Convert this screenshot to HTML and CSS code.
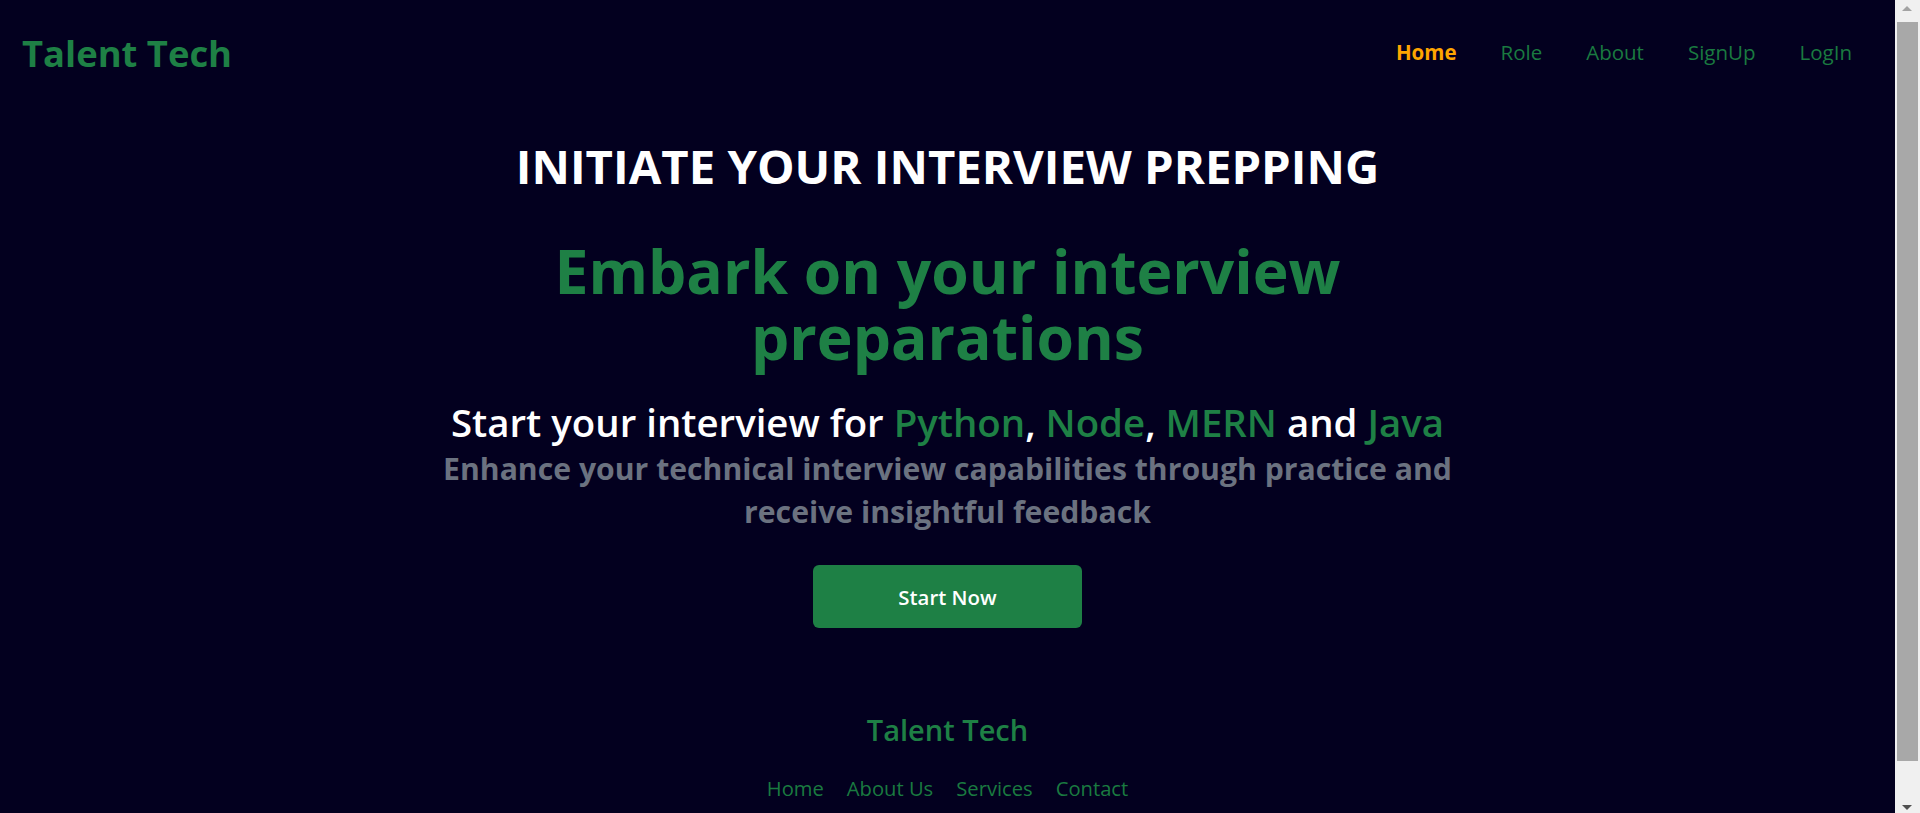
FILE: index.html
```html
<!DOCTYPE html>
<html lang="en">
<head>
<meta charset="utf-8">
<title>Talent Tech</title>
<link rel="stylesheet" href="styles.css">
</head>
<body>
<header class="navbar">
  <div class="logo">Talent Tech</div>
  <nav>
    <ul class="nav-links">
      <li><a href="#" class="active">Home</a></li>
      <li><a href="#">Role</a></li>
      <li><a href="#">About</a></li>
      <li><a href="#">SignUp</a></li>
      <li><a href="#">LogIn</a></li>
    </ul>
  </nav>
</header>
<main class="hero">
  <h1 class="hero-title">INITIATE YOUR INTERVIEW PREPPING</h1>
  <h2 class="hero-headline">Embark on your interview preparations</h2>
  <h3 class="hero-langs">Start your interview for <span class="hl">Python</span>, <span class="hl">Node</span>, <span class="hl">MERN</span> and <span class="hl">Java</span></h3>
  <p class="hero-sub">Enhance your technical interview capabilities through practice and receive insightful feedback</p>
  <button class="cta" type="button">Start Now</button>
</main>
<footer class="footer">
  <h3 class="footer-title">Talent Tech</h3>
  <ul class="footer-links">
    <li><a href="#">Home</a></li>
    <li><a href="#">About Us</a></li>
    <li><a href="#">Services</a></li>
    <li><a href="#">Contact</a></li>
  </ul>
</footer>
<div class="scrollbar" aria-hidden="true">
  <span class="sb-arrow sb-up"></span>
  <span class="sb-thumb"></span>
  <span class="sb-arrow sb-down"></span>
</div>
</body>
</html>
```

FILE: styles.css
```css
* { box-sizing: border-box; }

html { background: #03001f; }

body {
  margin: 0;
  padding-right: 25px;
  background: #03001f;
  font-family: "Open Sans", "Noto Sans", sans-serif;
  color: #ffffff;
}

a { text-decoration: none; }

.navbar {
  display: flex;
  align-items: center;
  justify-content: space-between;
  height: 106px;
  padding: 0 43px 0 22px;
}

.logo {
  font-size: 36.4px;
  font-weight: 700;
  color: #1e8045;
}

.nav-links {
  display: flex;
  gap: 44px;
  margin: -2px 0 0;
  padding: 0;
  list-style: none;
}

.nav-links a {
  font-size: 20.5px;
  color: #1a7a40;
}

.nav-links a.active {
  color: #ffa500;
  font-weight: 700;
}

.hero {
  display: flex;
  flex-direction: column;
  align-items: center;
  text-align: center;
  padding-top: 27px;
}

.hero-title {
  margin: 0;
  font-size: 47.3px;
  font-weight: 700;
  color: #ffffff;
}

.hero-headline {
  max-width: 1024px;
  margin: 40px 0 0;
  font-size: 60.6px;
  line-height: 66px;
  font-weight: 700;
  color: #1e8045;
}

.hero-langs {
  margin: 31px 0 0;
  font-size: 38.4px;
  line-height: 43px;
  font-weight: 600;
  color: #ffffff;
}

.hl { color: #1e8045; }

.hero-sub {
  max-width: 1040px;
  margin: 3px 0 0;
  font-size: 30.2px;
  line-height: 43px;
  font-weight: 700;
  color: #6b7280;
}

.cta {
  width: 269px;
  height: 63px;
  margin-top: 32px;
  border: none;
  border-radius: 6px;
  background: #1e8045;
  color: #ffffff;
  font-family: inherit;
  font-size: 20.4px;
  font-weight: 600;
}

.footer {
  display: flex;
  flex-direction: column;
  align-items: center;
  padding: 82px 0 55px;
}

.footer-title {
  margin: 0;
  font-size: 29px;
  font-weight: 600;
  color: #1e8045;
}

.footer-links {
  display: flex;
  gap: 23px;
  margin: 25px 0 0;
  padding: 0;
  list-style: none;
}

.footer-links a {
  font-size: 20.2px;
  color: #1a7a40;
}

/* decorative classic scrollbar, drawn over the right edge as in the reference */
.scrollbar {
  position: fixed;
  top: 0;
  right: 0;
  width: 25px;
  height: 100vh;
  background: #f0f0f0;
}

.sb-thumb {
  position: absolute;
  top: 22px;
  bottom: 52px;
  left: 2px;
  right: 2px;
  background: #a8a8a8;
}

.sb-arrow {
  position: absolute;
  left: 7px;
  width: 0;
  height: 0;
  border-left: 5.5px solid transparent;
  border-right: 5.5px solid transparent;
}

.sb-up {
  top: 6px;
  border-bottom: 5px solid #a3a3a3;
}

.sb-down {
  bottom: 3px;
  border-top: 5px solid #505050;
}
```
